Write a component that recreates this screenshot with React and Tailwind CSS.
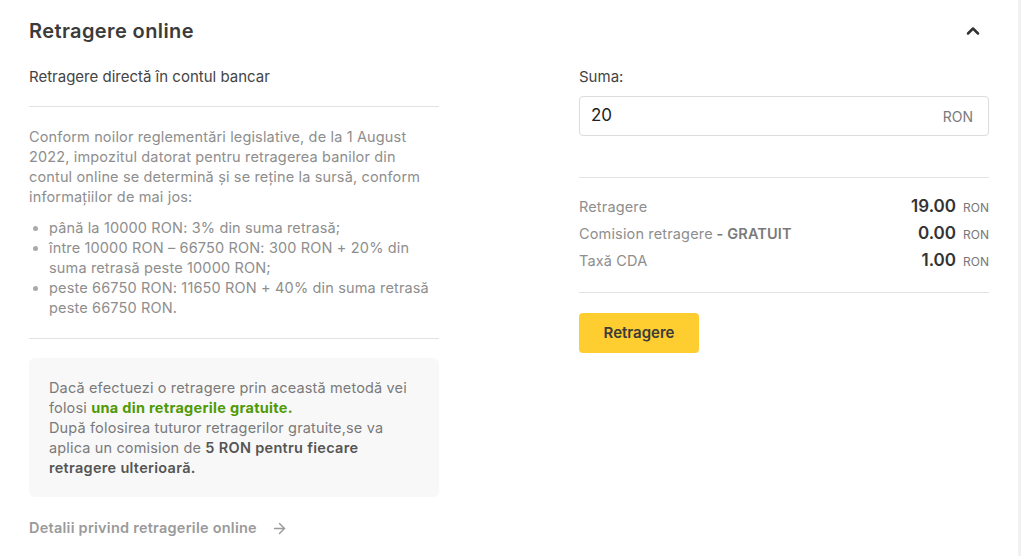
import { ChevronUp, ArrowRight } from "lucide-react";

const rows = [
  { label: "Retragere", value: "19.00" },
  { label: "Comision retragere", extra: "- GRATUIT", value: "0.00" },
  { label: "Taxă CDA", value: "1.00" },
];

const App = () => {
  return (
    <div className="flex min-h-[556px] bg-[#f1f1f1] font-['Inter',sans-serif]">
      <div className="w-[1018px] bg-white px-[29px] pb-[20px]">
        {/* Header */}
        <div className="flex h-[62px] items-center justify-between">
          <h2 className="text-[20px] font-semibold tracking-[0.4px] text-[#3b3b3b]">Retragere online</h2>
          <button type="button" className="mr-[6px] text-[#333]">
            <ChevronUp size={20} strokeWidth={3} />
          </button>
        </div>

        <div className="flex justify-between">
          {/* Left column */}
          <div className="w-[410px]">
            <p className="mt-[5px] border-b border-[#e3e3e3] pb-[19px] text-[15px] leading-[20px] text-[#444]">
              Retragere directă în contul bancar
            </p>
            <div className="border-b border-[#e3e3e3] pt-[20px] pb-[20px] text-[14.5px] leading-[20px] tracking-[0.15px] text-[#8e8e8e]">
              <p>
                Conform noilor reglementări legislative, de la 1 August 2022, impozitul datorat pentru
                retragerea banilor din contul online se determină și se reține la sursă, conform
                informațiilor de mai jos:
              </p>
              <ul className="mt-[11px] list-disc pl-[20px] marker:text-[#aaa]">
                <li>până la 10000 RON: 3% din suma retrasă;</li>
                <li>între 10000 RON – 66750 RON: 300 RON + 20% din suma retrasă peste 10000 RON;</li>
                <li>peste 66750 RON: 11650 RON + 40% din suma retrasă peste 66750 RON.</li>
              </ul>
            </div>
            <div className="mt-[19px] rounded-md bg-[#f8f8f8] px-[20px] pt-[20px] pb-[19px] text-[14.5px] leading-[20px] tracking-[0.15px] text-[#7a7a7a]">
              Dacă efectuezi o retragere prin această metodă vei folosi{" "}
              <span className="font-bold tracking-[0.3px] text-[#4f9a05]">una din retragerile gratuite.</span>
              <br />
              După folosirea tuturor retragerilor gratuite,se va aplica un comision de{" "}
              <span className="font-semibold tracking-[0.3px] text-[#555]">5 RON pentru fiecare retragere ulterioară.</span>
            </div>
            <a
              href="#"
              className="mt-[21px] flex items-center gap-[14px] text-[14.5px] font-semibold leading-[20px] tracking-[0.25px] text-[#9a9a9a]"
            >
              Detalii privind retragerile online
              <ArrowRight size={17} strokeWidth={2} />
            </a>
          </div>

          {/* Right column */}
          <div className="w-[410px]">
            <div className="border-b border-[#e3e3e3] pb-[41px]">
              <label className="mt-[5px] block text-[15px] leading-[20px] text-[#444]">Suma:</label>
              <div className="mt-[9px] flex h-[40px] items-center justify-between rounded border border-[#dcdcdc] px-[11px]">
                <span className="text-[17px] text-[#222]">20</span>
                <span className="mr-[4px] text-[14px] text-[#7a7a7a]">RON</span>
              </div>
            </div>
            <div className="border-b border-[#e3e3e3] pt-[15px] pb-[18px]">
              {rows.map((row) => (
                <div key={row.label} className="flex h-[27px] items-center justify-between">
                  <span className="text-[14.5px] tracking-[0.15px] text-[#8e8e8e]">
                    {row.label}
                    {row.extra && <span className="font-semibold text-[#7a7a7a]"> {row.extra}</span>}
                  </span>
                  <span className="flex items-baseline">
                    <span className="text-[17px] font-semibold text-[#333]">{row.value}</span>
                    <span className="ml-[7px] text-[12px] text-[#777]">RON</span>
                  </span>
                </div>
              ))}
            </div>
            <button
              type="button"
              className="mt-[20px] h-[40px] w-[120px] rounded bg-[#fecd2f] text-[15px] font-semibold text-[#3b3b3b]"
            >
              Retragere
            </button>
          </div>
        </div>
      </div>
    </div>
  );
};

export default App;
